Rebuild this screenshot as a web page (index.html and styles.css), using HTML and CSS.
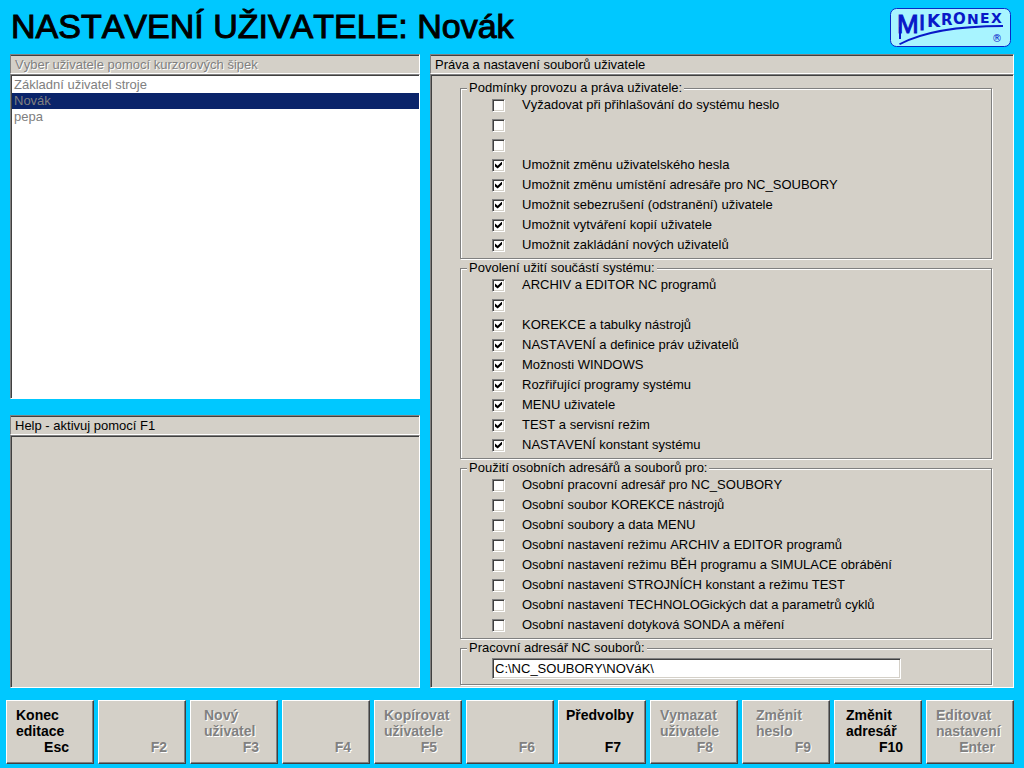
FILE: index.html
```html
<!DOCTYPE html>
<html lang="cs">
<head>
<meta charset="utf-8">
<title>Nastavení uživatele</title>
<link rel="stylesheet" href="styles.css">
</head>
<body>
<header class="top">
  <h1 class="title">NASTAVENÍ UŽIVATELE: Novák</h1>
  <svg class="logo" viewBox="0 0 122 40" role="img" aria-label="Mikronex">
    <rect class="logo-box" x="0.500" y="1.500" width="120" height="38" rx="6"/>
    <g class="logo-text">
      <text class="thin" x="7" y="26" font-size="26">M</text>
      <text class="thin" x="29" y="23" font-size="22">I</text>
      <text x="37" y="20" font-size="17">K</text>
      <text x="51" y="18" font-size="15">R</text>
      <text x="63" y="17" font-size="15">O</text>
      <text x="77" y="17" font-size="14">N</text>
      <text x="90" y="16" font-size="14">E</text>
      <text x="101" y="16" font-size="14">X</text>
      <text class="reg" x="102" y="35" font-size="10">®</text>
    </g>
    <path class="logo-line" d="M9 36.500Q43 18 113 18V20Q45 20 10 38Z"/>
    <path class="logo-stem" d="M10 20V32"/>
  </svg>
</header>
<main class="panels">
  <div class="left">
    <section class="panel users">
      <label class="caption disabled" for="users">Vyber uživatele pomocí kurzorových šipek</label>
      <select class="list" id="users" size="20" disabled>
        <option>Základní uživatel stroje</option>
        <option selected>Novák</option>
        <option>pepa</option>
      </select>
    </section>
    <section class="panel help">
      <h2 class="caption">Help - aktivuj pomocí F1</h2>
      <div class="pane"></div>
    </section>
  </div>
  <section class="panel rights">
    <h2 class="caption">Práva a nastavení souborů uživatele</h2>
    <form class="pane form">
      <fieldset class="group">
        <legend>Podmínky provozu a práva uživatele:</legend>
        <label class="row"><input type="checkbox">Vyžadovat při přihlašování do systému heslo</label>
        <label class="row"><input type="checkbox"></label>
        <label class="row"><input type="checkbox"></label>
        <label class="row"><input type="checkbox" checked>Umožnit změnu uživatelského hesla</label>
        <label class="row"><input type="checkbox" checked>Umožnit změnu umístění adresáře pro NC_SOUBORY</label>
        <label class="row"><input type="checkbox" checked>Umožnit sebezrušení (odstranění) uživatele</label>
        <label class="row"><input type="checkbox" checked>Umožnit vytváření kopií uživatele</label>
        <label class="row"><input type="checkbox" checked>Umožnit zakládání nových uživatelů</label>
      </fieldset>
      <fieldset class="group">
        <legend>Povolení užití součástí systému:</legend>
        <label class="row"><input type="checkbox" checked>ARCHIV a EDITOR NC programů</label>
        <label class="row"><input type="checkbox" checked></label>
        <label class="row"><input type="checkbox" checked>KOREKCE a tabulky nástrojů</label>
        <label class="row"><input type="checkbox" checked>NASTAVENÍ a definice práv uživatelů</label>
        <label class="row"><input type="checkbox" checked>Možnosti WINDOWS</label>
        <label class="row"><input type="checkbox" checked>Rozřiřující programy systému</label>
        <label class="row"><input type="checkbox" checked>MENU uživatele</label>
        <label class="row"><input type="checkbox" checked>TEST a servisní režim</label>
        <label class="row"><input type="checkbox" checked>NASTAVENÍ konstant systému</label>
      </fieldset>
      <fieldset class="group">
        <legend>Použití osobních adresářů a souborů pro:</legend>
        <label class="row"><input type="checkbox">Osobní pracovní adresář pro NC_SOUBORY</label>
        <label class="row"><input type="checkbox">Osobní soubor KOREKCE nástrojů</label>
        <label class="row"><input type="checkbox">Osobní soubory a data MENU</label>
        <label class="row"><input type="checkbox">Osobní nastavení režimu ARCHIV a EDITOR programů</label>
        <label class="row"><input type="checkbox">Osobní nastavení režimu BĚH programu a SIMULACE obrábění</label>
        <label class="row"><input type="checkbox">Osobní nastavení STROJNÍCH konstant a režimu TEST</label>
        <label class="row"><input type="checkbox">Osobní nastavení TECHNOLOGických dat a parametrů cyklů</label>
        <label class="row"><input type="checkbox">Osobní nastavení dotyková SONDA a měření</label>
      </fieldset>
      <fieldset class="group">
        <legend id="dir-label">Pracovní adresář NC souborů:</legend>
        <input class="dir" type="text" aria-labelledby="dir-label" value="C:\NC_SOUBORY\NOVáK\">
      </fieldset>
    </form>
  </section>
</main>
<footer class="keys">
  <button class="key"><span>Konec<br>editace</span><span class="fn far">Esc</span></button>
  <button class="key" disabled><span class="fn">F2</span></button>
  <button class="key indent" disabled><span>Nový<br>uživatel</span><span class="fn">F3</span></button>
  <button class="key" disabled><span class="fn">F4</span></button>
  <button class="key" disabled><span>Kopírovat<br>uživatele</span><span class="fn far">F5</span></button>
  <button class="key" disabled><span class="fn">F6</span></button>
  <button class="key tight"><span>Předvolby<br><br></span><span class="fn far">F7</span></button>
  <button class="key" disabled><span>Vymazat<br>uživatele</span><span class="fn far">F8</span></button>
  <button class="key indent" disabled><span>Změnit<br>heslo</span><span class="fn">F9</span></button>
  <button class="key wide"><span>Změnit<br>adresář</span><span class="fn">F10</span></button>
  <button class="key" disabled><span>Editovat<br>nastavení</span><span class="fn">Enter</span></button>
</footer>
</body>
</html>
```
FILE: styles.css
```css
:root {
  --face: #d4d0c8;
  --shade: #808080;
  --dark: #404040;
}
* { box-sizing: border-box; }
body {
  margin: 0;
  min-height: 100vh;
  display: flex;
  flex-direction: column;
  background: #00c8ff;
  color: #000;
  font: 13px/16px "Liberation Sans", Arial, sans-serif;
  font-kerning: none;
}
.top {
  height: 54px;
  padding: 7px 12px 0 11px;
  display: flex;
  justify-content: space-between;
  align-items: flex-start;
}
.title {
  margin: 0;
  font-size: 34px;
  line-height: 38px;
  font-weight: 400;
  -webkit-text-stroke: 1px #000;
}
.logo { width: 122px; height: 40px; }
.logo-box { fill: #a8f4ff; stroke: #0828c8; }
.logo-text {
  fill: #0818c8;
  font-family: "DejaVu Sans", sans-serif;
  font-weight: 700;
}
.logo-text .thin {
  font-family: "Liberation Sans", Arial, sans-serif;
  font-weight: 400;
  stroke: #0818c8;
}
.logo-text .reg { font-weight: 400; }
.logo-line { fill: #0818c8; }
.logo-stem { stroke: #0818c8; stroke-width: 2; }

.panels {
  flex: 1;
  display: grid;
  grid-template-columns: 410fr 584fr;
  gap: 10px;
  padding: 0 10px;
}
.left {
  display: flex;
  flex-direction: column;
  gap: 16px;
}
.panel { display: flex; flex-direction: column; }
.users { flex: 344; }
.help { flex: 274; }
.caption {
  height: 20px;
  margin: 0;
  padding: 2px 4px 0;
  font-size: 13px;
  font-weight: 400;
  background: var(--face);
  border: 1px solid;
  border-color: var(--shade) #fff #fff var(--shade);
  box-shadow: inset 0 1px var(--dark);
}
.disabled { color: var(--shade); text-shadow: 1px 1px #fff; }
.pane, .list {
  flex: 1;
  background: var(--face);
  border: 1px solid;
  border-color: var(--shade) #fff #fff var(--shade);
  box-shadow: inset 1px 1px var(--dark);
}
.list {
  appearance: none;
  width: 100%;
  margin: 0;
  padding: 2px 0 1px 1px;
  border-radius: 0;
  background: #fff;
  font: inherit;
  opacity: 1;
  overflow: hidden;
}
.list option {
  min-height: 16px;
  padding: 0 2px;
  color: var(--shade);
  line-height: 16px;
}
.list option:checked { background: #0a246a; color: var(--shade); }

.form { padding: 6px 21px 0 29px; }
.group {
  min-width: 0;
  margin: 0 0 2px;
  padding: 0 0 3px 31px;
  border: 1px solid var(--shade);
  box-shadow: 1px 1px #fff, inset 1px 1px #fff;
}
.group legend {
  margin-left: -25px;
  padding: 0 2px;
  line-height: 14px;
  background: var(--face);
}
.row {
  height: 20px;
  display: flex;
  align-items: center;
  gap: 17px;
}
.row input {
  appearance: none;
  width: 13px;
  height: 13px;
  margin: 0;
  background: #fff;
  border: 1px solid;
  border-color: var(--shade) #fff #fff var(--shade);
  box-shadow: inset 1px 1px var(--dark), inset -1px -1px var(--face);
}
.row input:checked::before {
  content: "";
  display: block;
  width: 7px;
  height: 7px;
  margin: 2px;
  background: #000;
  clip-path: polygon(0 28%, 38% 60%, 100% 0, 100% 42%, 38% 100%, 0 70%);
}
.dir {
  display: block;
  width: 82%;
  height: 21px;
  margin: 3px 0 2px;
  padding: 0 2px;
  font: inherit;
  color: #000;
  background: #fff;
  border: 1px solid;
  border-color: var(--shade) #fff #fff var(--shade);
  border-radius: 0;
  box-shadow: inset 1px 1px var(--dark), inset -1px -1px var(--face);
}

.keys {
  display: grid;
  grid-template-columns: repeat(11, 1fr);
  gap: 4px;
  padding: 12px 10px 4px 6px;
}
.key {
  height: 64px;
  padding: 6px 0 8px 9px;
  display: flex;
  flex-direction: column;
  justify-content: flex-end;
  text-align: left;
  font: 700 14px/16px "Liberation Sans", Arial, sans-serif;
  font-kerning: none;
  color: #000;
  background: var(--face);
  border: 1px solid;
  border-color: #fff var(--dark) var(--dark) #fff;
  box-shadow: inset -1px -1px var(--shade);
}
.key:disabled {
  color: var(--shade);
  text-shadow: 1px 1px #fff;
}
.indent { padding-left: 13px; }
.wide { padding-left: 11px; }
.tight { padding-left: 7px; }
.fn { align-self: flex-end; margin-right: 18px; }
.far { margin-right: 24px; }
```
